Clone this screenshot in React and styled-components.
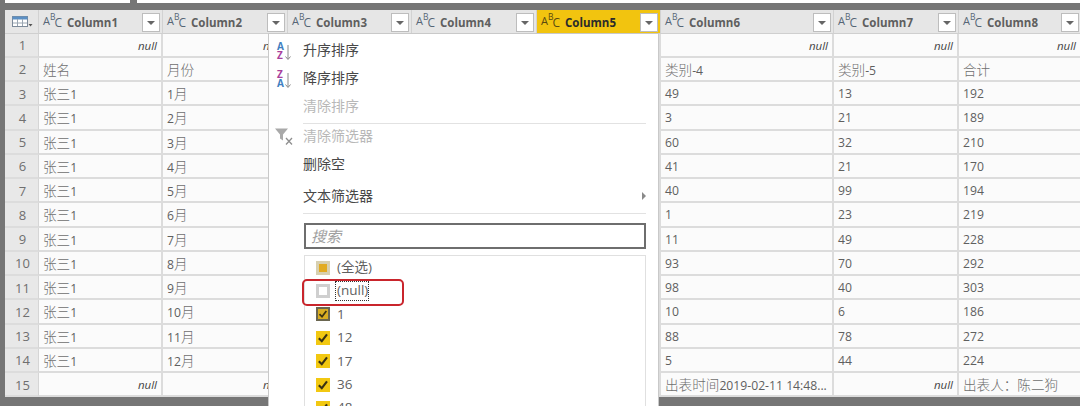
import React from "react";
import styled, { createGlobalStyle } from "styled-components";

const Global = createGlobalStyle`
  html, body { margin: 0; padding: 0; background: #767676; }
  body { width: 1080px; height: 406px; overflow: hidden; font-family: "Open Sans", "Noto Sans CJK SC", sans-serif; }
`;
const cjk = `"Open Sans", "Noto Sans CJK SC", sans-serif`;

const Page = styled.div`
  position: relative; width: 1080px; height: 406px; overflow: hidden; background: #767676;
  display: flex; flex-direction: column;
`;
const TopStrip = styled.div`display: flex; gap: 7px; height: 3px; padding-left: 5px; margin-bottom: 7px;`;
const TopBox = styled.div`height: 3px; background: #fff; width: ${p => p.$w}px; flex: ${p => p.$grow ? 1 : "none"};`;
const Grid = styled.div`
  margin-left: 5px; width: 1080px; background: #fafafa; flex: none;
  display: grid; grid-template-columns: 34px 124px 125px 124px 125px 124px 173px 125px 123px;
  grid-template-rows: 23.5px repeat(15, 24.25px);
`;
const Head = styled.div`
  display: flex; align-items: center; position: relative; padding: 2px 22px 0 4px; gap: 8px; box-sizing: border-box;
  background: ${p => p.$active ? "#f2c40f" : "#e6e6e6"};
  border-right: 1px solid #d2d2d2; border-bottom: 1px solid #cfcfcf;
  color: ${p => p.$active ? "#2b2b2b" : "#5f5f5f"};
  font: 700 11.5px/1 ${cjk};
`;
const Corner = styled(Head)`padding: 1px 0 0 7px; gap: 0; background: #e6e6e6;`;
const TypeIcon = styled.span`
  display: inline-flex; align-items: flex-start; font: 400 11px/1 "Open Sans", sans-serif; width: 16px; flex: none;
  color: ${p => p.$active ? "#5a4a10" : "#566676"};
`;
const Sup = styled.span`font-size: 8.5px; margin: -2px 0 0 0;`;
const Low = styled.span`font-size: 12px; margin: 2px 0 0 -1px;`;
const Drop = styled.span`
  position: absolute; right: 2px; top: 3px; width: 18px; height: 19px; box-sizing: border-box;
  background: #fff; border: 1px solid #bdbdbd; display: flex; align-items: center; justify-content: center;
  &::after { content: ""; border: 4px solid transparent; border-top: 4px solid #666; border-bottom: 0; }
`;
const RowNum = styled.div`
  background: #e8e8e8; color: #6f6f6f; font: 400 13px/1 ${cjk};
  display: flex; align-items: center; justify-content: center; box-sizing: border-box;
  border-bottom: 2px solid #dcdcdc; border-right: 1px solid #d5d5d5; padding: 2px 0 0 2px;
`;
const Cell = styled.div`
  display: flex; align-items: center; box-sizing: border-box; padding: 2px 4px 0 4px; white-space: nowrap; overflow: hidden;
  border-bottom: 2px solid #dcdcdc; border-right: 2px solid #dcdcdc; background: #fbfbfb;
  color: ${p => p.$null ? "#444" : "#5f5f5f"};
  justify-content: ${p => p.$null ? "flex-end" : "flex-start"};
  font: ${p => p.$null ? "italic 400 11.5px" : "400 12.2px"}/1 ${cjk};
`;
const Han = styled.span`font-size: 13.6px; font-weight: 300; color: #6e6e6e;`;
const Menu = styled.div`
  position: absolute; left: 268px; top: 33px; width: 391px; height: 380px; box-sizing: border-box;
  background: #fff; border: 1px solid #c9c9c9; padding-top: 2px; color: #444;
  display: flex; flex-direction: column;
`;
const Item = styled.div`
  height: ${p => p.$h}px; flex: none; display: flex; align-items: center; position: relative;
  color: ${p => p.$off ? "#b8b8b8" : "#484848"}; font: 400 14px/1 ${cjk};
`;
const IconSlot = styled.span`width: 34px; flex: none; display: flex; justify-content: flex-start; padding-left: 5px; box-sizing: border-box;`;
const Arrow = styled.span`
  position: absolute; right: 12px; top: 50%; margin-top: -4px;
  border-left: 4px solid #8a8a8a; border-top: 4px solid transparent; border-bottom: 4px solid transparent;
`;
const Sep = styled.div`height: 1px; background: #e2e2e2; margin: ${p => p.$top}px 12px 0 34px; flex: none;`;
const Search = styled.div`
  height: 26px; margin: 9px 12px 0 35px; border: 2px solid #6e6e6e; box-sizing: border-box; flex: none;
  display: flex; align-items: center; padding-left: 5px; color: #a0a0a0; font: italic 400 15px/1 ${cjk};
`;
const List = styled.div`
  margin: 6px 12px 0 35px; border: 1px solid #e0e0e0; flex: 1; box-sizing: border-box; overflow: hidden;
`;
const ListRow = styled.div`height: 23.4px; display: flex; align-items: center; padding-left: 11px; gap: 5px; color: #5f5f5f; font: 400 13.5px/1 ${cjk};`;
const Check = styled.span`
  width: 14px; height: 14px; flex: none; box-sizing: border-box; display: flex; align-items: center; justify-content: center;
  background: ${p => ({ all: "#e2ab22", none: "#fff", dark: "#d9ad22", on: "#f2c811" }[p.$kind])};
  border: ${p => ({ all: "3px solid #d8d0b0", none: "3px solid #cfcfcf", dark: "2px solid #6a6650", on: "0" }[p.$kind])};
`;
const Label = styled.span`
  padding: 3px 1px 3px 2px; outline: ${p => p.$focus ? "1px dotted #333" : "none"}; outline-offset: -1px;
`;
const Annotation = styled.div`
  position: absolute; left: 302px; top: 279px; width: 102px; height: 27px; box-sizing: border-box;
  border: 2px solid #c9252c; border-radius: 5px; pointer-events: none;
`;

const TableIcon = () => (
  <svg width="21" height="11" viewBox="0 0 21 11">
    <rect x="0.5" y="0.5" width="15" height="10" fill="#fff" stroke="#7d8a99" />
    <rect x="0.5" y="0.5" width="15" height="3" fill="#5b8fc4" />
    <path d="M5.5 3v7M10.5 3v7M1 7h14" stroke="#9aa6b2" fill="none" />
    <path d="M16.5 8h4l-2 2.5z" fill="#555" />
  </svg>
);
const SortIcon = ({ top, bottom, topFill, bottomFill }) => (
  <svg width="20" height="22" viewBox="0 0 20 22" style={{ overflow: "visible" }}>
    <text x="3" y="11" fontFamily="Open Sans, sans-serif" fontWeight="700" fontSize="10" fill={topFill}>{top}</text>
    <text x="3" y="19.5" fontFamily="Open Sans, sans-serif" fontWeight="700" fontSize="10" fill={bottomFill}>{bottom}</text>
    <path d="M14 6v14M11.5 17.5l2.5 3 2.5-3" stroke="#8a8a8a" strokeWidth="1" fill="none" />
  </svg>
);
const ClearFilter = () => (
  <svg width="20" height="20" viewBox="0 0 20 20">
    <path d="M1 2.5h13l-5 6v6l-3-2v-4z" fill="#a9a9a9" />
    <path d="M12 12l6 6.5M18 12l-6 6.5" stroke="#8f8f8f" strokeWidth="1.3" fill="none" />
  </svg>
);
const Tick = () => (
  <svg width="12" height="12" viewBox="0 0 12 12">
    <path d="M1.8 6.2l3 3 5.2-6.8" stroke="#3a3213" strokeWidth="2.1" fill="none" />
  </svg>
);

const months = ["1月","2月","3月","4月","5月","6月","7月","8月","9月","10月","11月","12月"];
const c6 = [49,3,60,41,40,1,11,93,98,10,88,5];
const c7 = [13,21,32,21,99,23,49,70,40,6,78,44];
const c8 = [192,189,210,170,194,219,228,292,303,186,272,224];

const rows = [
  [null, null, null, null, null, null, null, null],
  ["姓名", "月份", "", "", "", "类别-4", "类别-5", "合计"],
  ...months.map((m, i) => ["张三1", m, "", "", "", String(c6[i]), String(c7[i]), String(c8[i])]),
  [null, null, null, null, null, "出表时间2019-02-11 14:48...", null, "出表人：陈二狗"],
];

const listItems = [
  ["all", "(全选)"], ["none", "(null)"], ["dark", "1"], ["on", "12"], ["on", "17"], ["on", "36"], ["on", "48"],
];

const CellText = ({ text }) =>
  text.split(/([\u3000-\u9fff\uff00-\uffef]+)/).map((part, i) =>
    i % 2 ? <Han key={i}>{part}</Han> : part
  );

export default function App() {
  return (
    <Page>
      <Global />
      <TopStrip>
        <TopBox $w={125} />
        <TopBox $grow />
      </TopStrip>
      <Grid>
        <Corner><TableIcon /></Corner>
        {[1,2,3,4,5,6,7,8].map(n => (
          <Head key={n} $active={n === 5}>
            <TypeIcon $active={n === 5}>A<Sup>B</Sup><Low>C</Low></TypeIcon>
            Column{n}
            <Drop />
          </Head>
        ))}
        {rows.map((r, i) => (
          <React.Fragment key={i}>
            <RowNum>{i + 1}</RowNum>
            {r.map((v, j) => (
              <Cell key={j} $null={v === null}>
                {v === null ? "null" : <span><CellText text={v} /></span>}
              </Cell>
            ))}
          </React.Fragment>
        ))}
      </Grid>
      <Menu>
        <Item $h={28}><IconSlot><SortIcon top="A" bottom="Z" topFill="#3f7fc1" bottomFill="#a8409c" /></IconSlot>升序排序</Item>
        <Item $h={28}><IconSlot><SortIcon top="Z" bottom="A" topFill="#a8409c" bottomFill="#3f7fc1" /></IconSlot>降序排序</Item>
        <Item $h={28} $off><IconSlot />清除排序</Item>
        <Sep $top={3} />
        <Item $h={24} $off><IconSlot><ClearFilter /></IconSlot>清除筛选器</Item>
        <Item $h={32}><IconSlot />删除空</Item>
        <Item $h={32}><IconSlot />文本筛选器<Arrow /></Item>
        <Sep $top={1} />
        <Search>搜索</Search>
        <List>
          {listItems.map(([kind, text]) => (
            <ListRow key={text}>
              <Check $kind={kind}>{(kind === "on" || kind === "dark") && <Tick />}</Check>
              <Label $focus={kind === "none"}>{text}</Label>
            </ListRow>
          ))}
        </List>
      </Menu>
      <Annotation />
    </Page>
  );
}
